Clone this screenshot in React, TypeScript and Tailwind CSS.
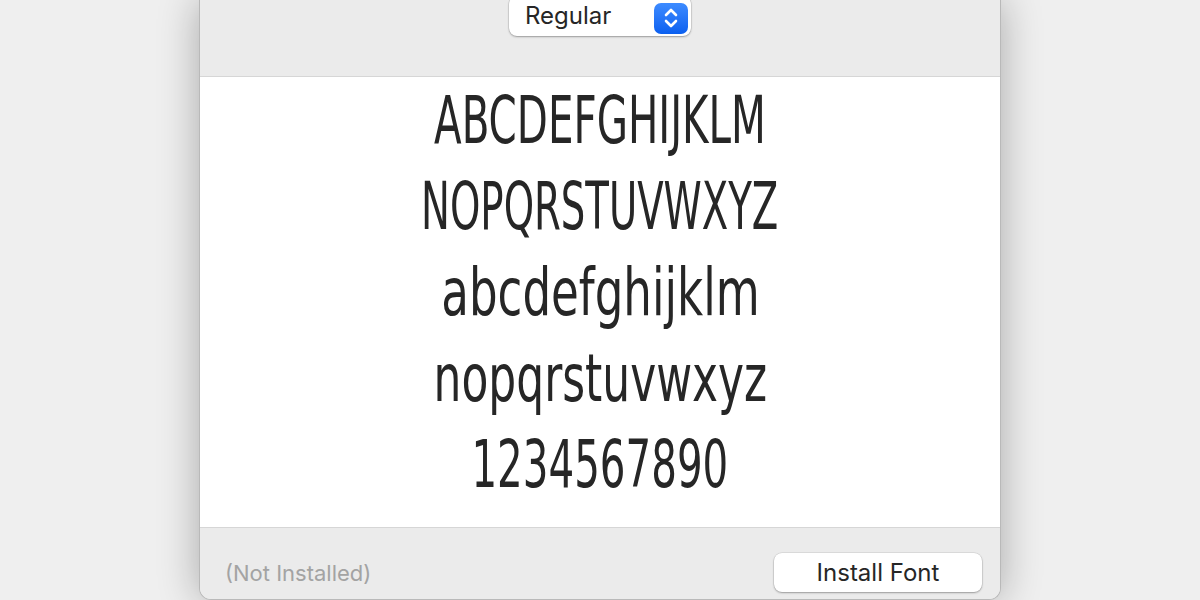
import React from "react";

const SAMPLE = [
    { t: "ABCDEFGHIJKLM", c: "scale-x-[0.68]" },
    { t: "NOPQRSTUVWXYZ", c: "scale-x-[0.65]" },
    { t: "abcdefghijklm", c: "scale-x-[0.76]" },
    { t: "nopqrstuvwxyz", c: "scale-x-[0.74]" },
    { t: "1234567890", c: "scale-x-[0.68]" },
];

function Stepper() {
    return (
        <div className="w-[34px] h-[31px] rounded-[7px] bg-gradient-to-b from-[#3d8bff] to-[#0a5ff0] flex items-center justify-center">
            <svg width="16" height="24" viewBox="0 0 16 24" fill="none" stroke="white" strokeWidth="2.6" strokeLinecap="round" strokeLinejoin="round">
                <path d="M3 9 L8 4 L13 9" />
                <path d="M3 15 L8 20 L13 15" />
            </svg>
        </div>
    );
}

export default function App() {
    return (
        <div className="w-[1200px] h-[600px] bg-[#efefef] overflow-hidden flex justify-center" style={{ fontFamily: "Inter, 'Liberation Sans', sans-serif" }}>
            <div className="w-[802px] h-[600px] flex flex-col border-x border-b border-[#b9b9b9] rounded-b-[12px] overflow-hidden shadow-[0_0_40px_rgba(0,0,0,0.3)] bg-[#ebebeb]">
                {/* toolbar */}
                <div className="h-[77px] shrink-0 bg-[#ebebeb] border-b border-[#d6d6d6] flex justify-center">
                    <div className="mt-[-4px] h-[40px] w-[182px] bg-white rounded-[8px] shadow-[0_1px_2px_rgba(0,0,0,0.3),0_0_0_0.5px_rgba(0,0,0,0.12)] flex items-center pl-[16px] pr-[3px]">
                        <span className="flex-1 text-[24px] text-[#262626] leading-none">Regular</span>
                        <div className="mt-[4px]">
                            <Stepper />
                        </div>
                    </div>
                </div>
                {/* sample */}
                <div className="h-[451px] shrink-0 bg-white border-b border-[#d6d6d6] flex flex-col items-center pt-[1px]">
                    {SAMPLE.map((s) => (
                        <div
                            key={s.t}
                            className={`h-[86px] flex items-center text-[66px] text-[#262626] leading-none whitespace-nowrap ${s.c}`}
                            style={{ fontFamily: "'DejaVu Sans Condensed', 'Liberation Sans Narrow', sans-serif", fontStretch: "condensed" }}
                        >
                            {s.t}
                        </div>
                    ))}
                </div>
                {/* footer */}
                <div className="flex-1 bg-[#ebebeb] flex items-end justify-between pl-[25px] pr-[18px] pb-[7px]">
                    <span className="text-[22px] text-[#a3a3a3] mb-[2px]">(Not Installed)</span>
                    <button className="w-[208px] h-[39px] bg-white rounded-[8px] shadow-[0_1px_2px_rgba(0,0,0,0.3),0_0_0_0.5px_rgba(0,0,0,0.12)] text-[24px] text-[#262626]">
                        Install Font
                    </button>
                </div>
            </div>
        </div>
    );
}
